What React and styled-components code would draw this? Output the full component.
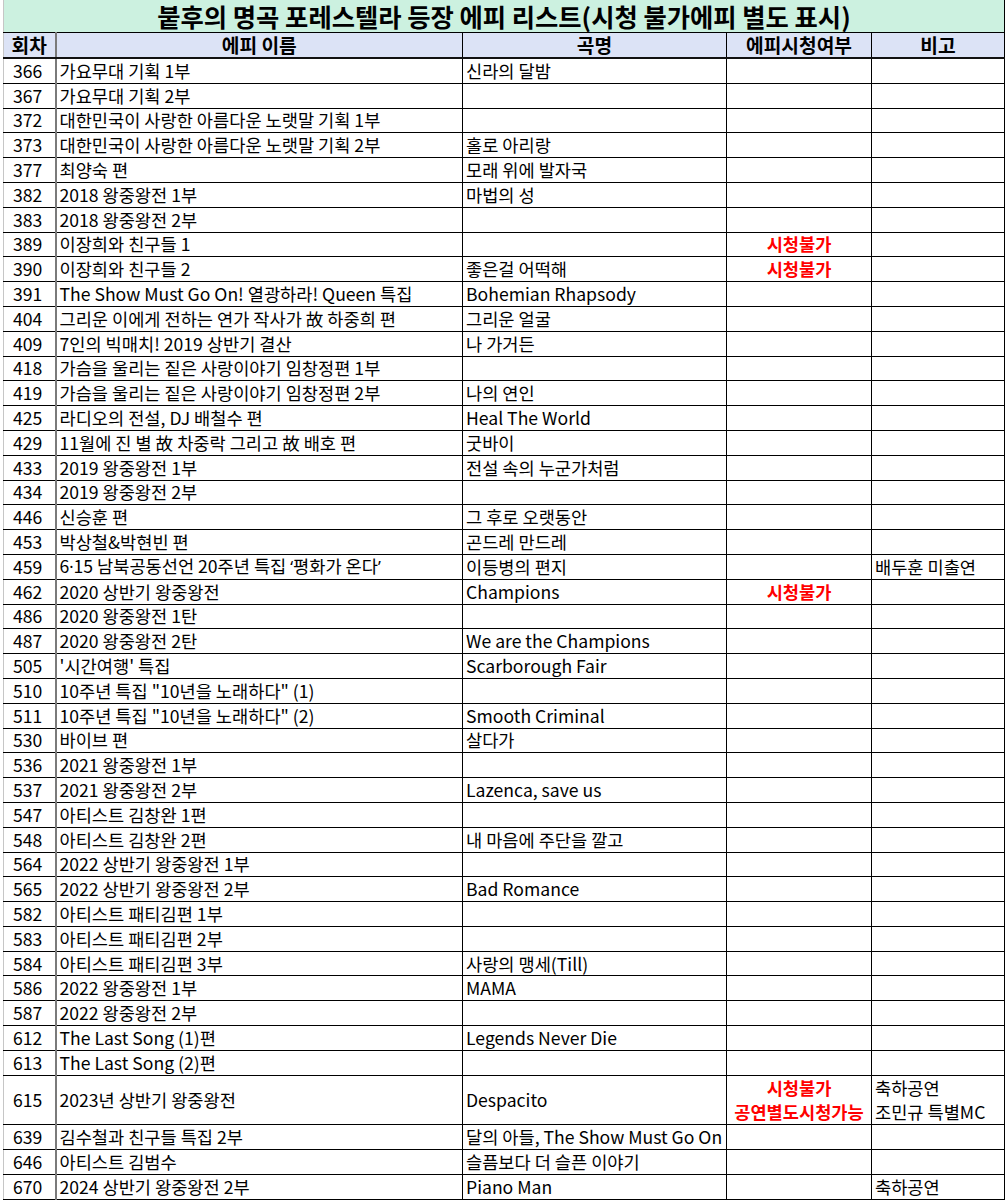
import styled, { createGlobalStyle } from 'styled-components'

const rows = [
  ['366', '가요무대 기획 1부', '신라의 달밤'],
  ['367', '가요무대 기획 2부', ''],
  ['372', '대한민국이 사랑한 아름다운 노랫말 기획 1부', ''],
  ['373', '대한민국이 사랑한 아름다운 노랫말 기획 2부', '홀로 아리랑'],
  ['377', '최양숙 편', '모래 위에 발자국'],
  ['382', '2018 왕중왕전 1부', '마법의 성'],
  ['383', '2018 왕중왕전 2부', ''],
  ['389', '이장희와 친구들 1', '', ['시청불가']],
  ['390', '이장희와 친구들 2', '좋은걸 어떡해', ['시청불가']],
  ['391', 'The Show Must Go On! 열광하라! Queen 특집', 'Bohemian Rhapsody'],
  ['404', '그리운 이에게 전하는 연가 작사가 故 하중희 편', '그리운 얼굴'],
  ['409', '7인의 빅매치! 2019 상반기 결산', '나 가거든'],
  ['418', '가슴을 울리는 짙은 사랑이야기 임창정편 1부', ''],
  ['419', '가슴을 울리는 짙은 사랑이야기 임창정편 2부', '나의 연인'],
  ['425', '라디오의 전설, DJ 배철수 편', 'Heal The World'],
  ['429', '11월에 진 별 故 차중락 그리고 故 배호 편', '굿바이'],
  ['433', '2019 왕중왕전 1부', '전설 속의 누군가처럼'],
  ['434', '2019 왕중왕전 2부', ''],
  ['446', '신승훈 편', '그 후로 오랫동안'],
  ['453', '박상철&박현빈 편', '곤드레 만드레'],
  ['459', '6·15 남북공동선언 20주년 특집 ‘평화가 온다’', '이등병의 편지', null, ['배두훈 미출연']],
  ['462', '2020 상반기 왕중왕전', 'Champions', ['시청불가']],
  ['486', '2020 왕중왕전 1탄', ''],
  ['487', '2020 왕중왕전 2탄', 'We are the Champions'],
  ['505', '\'시간여행\' 특집', 'Scarborough Fair'],
  ['510', '10주년 특집 "10년을 노래하다" (1)', ''],
  ['511', '10주년 특집 "10년을 노래하다" (2)', 'Smooth Criminal'],
  ['530', '바이브 편', '살다가'],
  ['536', '2021 왕중왕전 1부', ''],
  ['537', '2021 왕중왕전 2부', 'Lazenca, save us'],
  ['547', '아티스트 김창완 1편', ''],
  ['548', '아티스트 김창완 2편', '내 마음에 주단을 깔고'],
  ['564', '2022 상반기 왕중왕전 1부', ''],
  ['565', '2022 상반기 왕중왕전 2부', 'Bad Romance'],
  ['582', '아티스트 패티김편 1부', ''],
  ['583', '아티스트 패티김편 2부', ''],
  ['584', '아티스트 패티김편 3부', '사랑의 맹세(Till)'],
  ['586', '2022 왕중왕전 1부', 'MAMA'],
  ['587', '2022 왕중왕전 2부', ''],
  ['612', 'The Last Song (1)편', 'Legends Never Die'],
  ['613', 'The Last Song (2)편', ''],
  ['615', '2023년 상반기 왕중왕전', 'Despacito', ['시청불가', '공연별도시청가능'], ['축하공연', '조민규 특별MC']],
  ['639', '김수철과 친구들 특집 2부', '달의 아들, The Show Must Go On'],
  ['646', '아티스트 김범수', '슬픔보다 더 슬픈 이야기'],
  ['670', '2024 상반기 왕중왕전 2부', 'Piano Man', null, ['축하공연']],
]

const GlobalStyle = createGlobalStyle`
  body {
    margin: 0;
    background: #fff;
    font-family: "Noto Sans CJK KR", sans-serif;
    color: #000;
  }
`

const Sheet = styled.div`
  padding-left: 3px;
  width: 1000px;
`

const Table = styled.table`
  border-collapse: collapse;
  table-layout: fixed;
  width: 1001px;
  border-left: 1px solid #c6c6c6;
`

const Col = styled.col`
  width: ${p => p.$w}px;
`

const TitleCell = styled.td`
  height: 32px;
  padding: 0;
  background: #ccf1e0;
  text-align: center;
  font-weight: 700;
  font-size: 25.3px;
  line-height: 30px;
  border-bottom: 1px solid #000;
  border-right: 1px solid #000;
`

const HeadCell = styled.th`
  height: 24px;
  padding: 0;
  background: #dce3f6;
  font-weight: 700;
  font-size: 19.2px;
  line-height: 20px;
  text-align: center;
  border: 1px solid #000;
  border-bottom: 2px solid #111;
  border-left: ${p => (p.$first ? '0' : '1px solid #000')};
  border-right: ${p => (p.$first ? '2px solid #7a7a7a' : '1px solid #000')};
`

const Cell = styled.td`
  height: ${p => (p.$tall ? 48.6 : 23.8)}px;
  padding: 0 3px;
  font-size: 17.6px;
  line-height: 20px;
  white-space: nowrap;
  overflow: hidden;
  vertical-align: middle;
  text-align: ${p => p.$align || 'left'};
  border: 1px solid #000;
  border-left: ${p => (p.$first ? '0' : '1px solid #000')};
  border-right: ${p => (p.$first ? '2px solid #7a7a7a' : '1px solid #000')};
  padding-left: ${p => (p.$first ? '0' : '3px')};
`

// narrow Latin punctuation, like the spreadsheet font draws it
const Punct = styled.span`
  font-family: "Noto Sans", sans-serif;
  font-size: 16px;
`

const Lines = styled.div`
  display: flex;
  flex-direction: column;
  gap: 4px;
`

const Warn = styled.span`
  color: #ff0000;
  font-weight: 700;
`

function Text({ children }) {
  if (!children) return null
  return children.split(/([·‘’])/).map((part, i) =>
    /^[·‘’]$/.test(part) ? <Punct key={i}>{part}</Punct> : part
  )
}

export default function App() {
  return (
    <Sheet>
      <GlobalStyle />
      <Table>
        <colgroup>
          <Col $w={52} />
          <Col $w={407} />
          <Col $w={264} />
          <Col $w={145} />
          <Col $w={133} />
        </colgroup>
        <tbody>
          <tr>
            <TitleCell colSpan={5}>붙후의 명곡 포레스텔라 등장 에피 리스트(시청 불가에피 별도 표시)</TitleCell>
          </tr>
          <tr>
            <HeadCell $first>회차</HeadCell>
            <HeadCell>에피 이름</HeadCell>
            <HeadCell>곡명</HeadCell>
            <HeadCell>에피시청여부</HeadCell>
            <HeadCell>비고</HeadCell>
          </tr>
          {rows.map(([no, name, song, status, note]) => {
            const tall = (status && status.length > 1) || (note && note.length > 1)
            return (
              <tr key={no}>
                <Cell $first $align="center" $tall={tall}>{no}</Cell>
                <Cell $tall={tall}><Text>{name}</Text></Cell>
                <Cell $tall={tall}>{song}</Cell>
                <Cell $align="center" $tall={tall}>
                  {status && (
                    <Lines>
                      {status.map(s => <Warn key={s}>{s}</Warn>)}
                    </Lines>
                  )}
                </Cell>
                <Cell $tall={tall}>
                  {note && (
                    <Lines>
                      {note.map(n => <span key={n}>{n}</span>)}
                    </Lines>
                  )}
                </Cell>
              </tr>
            )
          })}
        </tbody>
      </Table>
    </Sheet>
  )
}
